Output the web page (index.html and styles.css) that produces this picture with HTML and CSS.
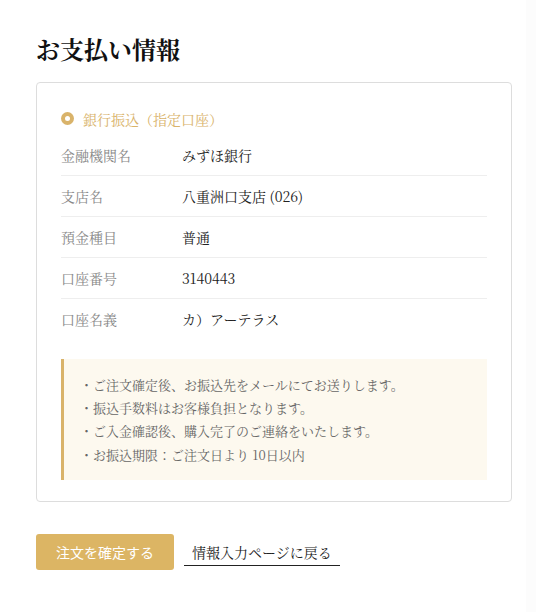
FILE: index.html
```html
<!DOCTYPE html>
<html lang="ja">
<head>
  <meta charset="UTF-8">
  <meta name="viewport" content="width=device-width, initial-scale=1">
  <title>お支払い情報</title>
  <link rel="stylesheet" href="styles.css">
</head>
<body>
  <div class="page">
    <h1>お支払い情報</h1>

    <div class="card">
      <div class="method">
        <span class="radio"></span>
        <span>銀行振込（指定口座）</span>
      </div>

      <dl class="bank">
        <div class="row"><dt>金融機関名</dt><dd>みずほ銀行</dd></div>
        <div class="row"><dt>支店名</dt><dd>八重洲口支店 (026)</dd></div>
        <div class="row"><dt>預金種目</dt><dd>普通</dd></div>
        <div class="row"><dt>口座番号</dt><dd>3140443</dd></div>
        <div class="row"><dt>口座名義</dt><dd>カ）アーテラス</dd></div>
      </dl>

      <ul class="notes">
        <li>・ご注文確定後、お振込先をメールにてお送りします。</li>
        <li>・振込手数料はお客様負担となります。</li>
        <li>・ご入金確認後、購入完了のご連絡をいたします。</li>
        <li>・お振込期限：ご注文日より 10日以内</li>
      </ul>
    </div>

    <div class="actions">
      <button class="btn-confirm">注文を確定する</button>
      <a href="#" class="back">情報入力ページに戻る</a>
    </div>
  </div>
</body>
</html>
```

FILE: styles.css
```css
* { box-sizing: border-box; margin: 0; padding: 0; }
html, body { min-height: 100%; }
body { font-family: "Noto Serif CJK JP", "Liberation Serif", "Noto Sans CJK JP", serif; background: #fcfcfc; color: #222; }
.page { width: 526px; min-height: 612px; background: #fff; padding: 32px 0 40px 36px; }
h1 { font-size: 24px; font-weight: 700; line-height: 1.4; margin-bottom: 16px; color: #111; }

.card { width: 476px; border: 1px solid #ddd; border-radius: 4px; padding: 24px 24px 21px; }
.method { display: flex; align-items: center; gap: 9px; color: #d9b36a; font-size: 14px; line-height: 24px; margin-bottom: 4px; }
.radio { width: 13px; height: 13px; border-radius: 50%; background: #d9b36a; position: relative; }
.radio::after { content: ""; position: absolute; left: 4px; top: 4px; width: 5px; height: 5px; border-radius: 50%; background: #fff; }

.bank .row { display: flex; padding: 10px 0; line-height: 20px; font-size: 14px; border-bottom: 1px solid #eee; }
.bank .row:last-child { border-bottom: none; }
.bank dt { width: 121px; color: #888; }
.bank dd { color: #222; }

.notes { list-style: none; margin-top: 20px; background: #fdf9ef; border-left: 3px solid #d9b36a; padding: 14px 16px; font-size: 13px; line-height: 23.4px; color: #666; }

.actions { display: flex; align-items: center; gap: 10px; margin-top: 32px; }
.btn-confirm { height: 36px; padding: 0 20px; border: none; border-radius: 3px; background: #dcb564; color: #fff; font-family: "Noto Sans CJK JP", "Noto Sans", sans-serif; font-size: 14px; cursor: pointer; }
.back { padding: 4px 8px 3px; font-size: 14px; color: #222; text-decoration: none; border-bottom: 1px solid #222; }
```
